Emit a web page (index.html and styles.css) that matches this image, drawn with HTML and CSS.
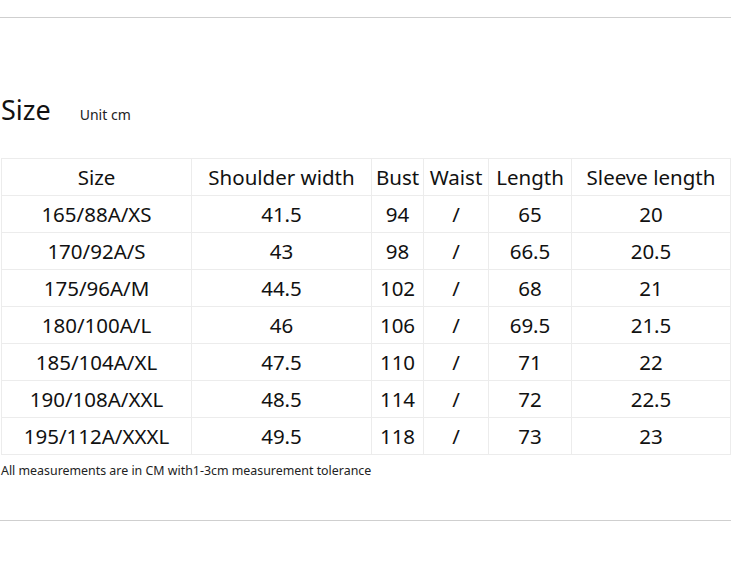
FILE: index.html
```html
<!DOCTYPE html>
<html>
<head>
<meta charset="utf-8">
<link rel="stylesheet" href="styles.css">
</head>
<body>
<div class="page">
  <hr class="rule top">
  <div class="heading">
    <span class="title">Size</span>
    <span class="unit">Unit cm</span>
  </div>
  <table class="chart">
    <tr><td class="c1">Size</td><td class="c2">Shoulder width</td><td class="c3">Bust</td><td class="c4">Waist</td><td class="c5">Length</td><td class="c6">Sleeve length</td></tr>
    <tr><td>165/88A/XS</td><td>41.5</td><td>94</td><td>/</td><td>65</td><td>20</td></tr>
    <tr><td>170/92A/S</td><td>43</td><td>98</td><td>/</td><td>66.5</td><td>20.5</td></tr>
    <tr><td>175/96A/M</td><td>44.5</td><td>102</td><td>/</td><td>68</td><td>21</td></tr>
    <tr><td>180/100A/L</td><td>46</td><td>106</td><td>/</td><td>69.5</td><td>21.5</td></tr>
    <tr><td>185/104A/XL</td><td>47.5</td><td>110</td><td>/</td><td>71</td><td>22</td></tr>
    <tr><td>190/108A/XXL</td><td>48.5</td><td>114</td><td>/</td><td>72</td><td>22.5</td></tr>
    <tr><td>195/112A/XXXL</td><td>49.5</td><td>118</td><td>/</td><td>73</td><td>23</td></tr>
  </table>
  <p class="note">All measurements are in CM with1-3cm measurement tolerance</p>
  <hr class="rule bottom">
</div>
</body>
</html>
```
FILE: styles.css
```css
html, body { margin: 0; padding: 0; background: #fff; }
body { font-family: "Noto Sans", "Open Sans", sans-serif; color: #111; }
.page { width: 732px; }
.rule { border: 0; height: 1px; background: #cfcfcf; margin: 0; width: 731px; }
.rule.top { margin-top: 17px; }
.heading { display: flex; align-items: baseline; margin-top: 77px; height: 30px; }
.title { font-size: 27px; line-height: 30px; margin-left: 1px; }
.unit { font-size: 14px; margin-left: 29px; color: #222; }
.chart { border-collapse: collapse; margin-top: 33px; margin-left: 1px; width: 730px; table-layout: fixed; }
.chart td { border: 1px solid #ececec; height: 36px; padding: 0; text-align: center; font-size: 20.5px; white-space: nowrap; }
.c1 { width: 189px; }
.c2 { width: 179px; }
.c3 { width: 51px; }
.c4 { width: 64px; }
.c5 { width: 82px; }
.c6 { width: auto; }
.note { font-size: 12.4px; margin: 7px 0 0 1px; color: #222; }
.rule.bottom { margin-top: 41px; }
```
